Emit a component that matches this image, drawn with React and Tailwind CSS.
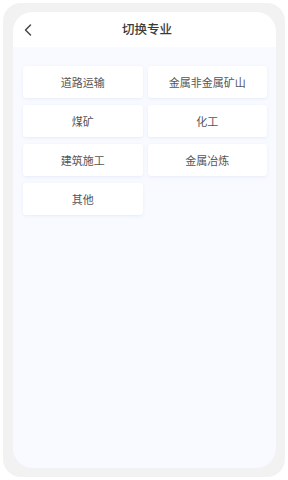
import React from 'react';
import { ChevronLeft } from 'lucide-react';

const majors = ['道路运输', '金属非金属矿山', '煤矿', '化工', '建筑施工', '金属冶炼', '其他'];

const App = () => {
  return (
    <div
      className="w-[288px] h-[480px] bg-white p-[3px]"
      style={{ fontFamily: '"Noto Sans CJK SC", "Noto Sans", sans-serif' }}
    >
      <div className="h-full bg-[#f2f2f2] rounded-[18px] pl-[10px] pr-[9px] py-[9px]">
        <div className="h-full rounded-[20px] bg-[#f8faff] overflow-hidden flex flex-col">
          {/* header */}
          <div className="h-[35px] bg-white flex items-center relative shrink-0">
            <ChevronLeft className="absolute left-[5px] top-[8px] w-[20px] h-[20px] text-[#444]" strokeWidth={1.7} />
            <div className="flex-1 text-center pl-[5px] text-[12.5px] font-medium text-[#3a3a3a]">切换专业</div>
          </div>

          <div className="pl-[10px] pr-[9px] pt-[19px]">
            <div className="grid grid-cols-2 gap-x-[5px] gap-y-[7px]">
              {majors.map((m) => (
                <div
                  key={m}
                  className="h-[32px] bg-white rounded-[3px] shadow-[0_1px_3px_rgba(180,195,230,0.25)] flex items-center justify-center text-[11px] text-[#555]"
                >
                  {m}
                </div>
              ))}
            </div>
          </div>
        </div>
      </div>
    </div>
  );
};

export default App;
